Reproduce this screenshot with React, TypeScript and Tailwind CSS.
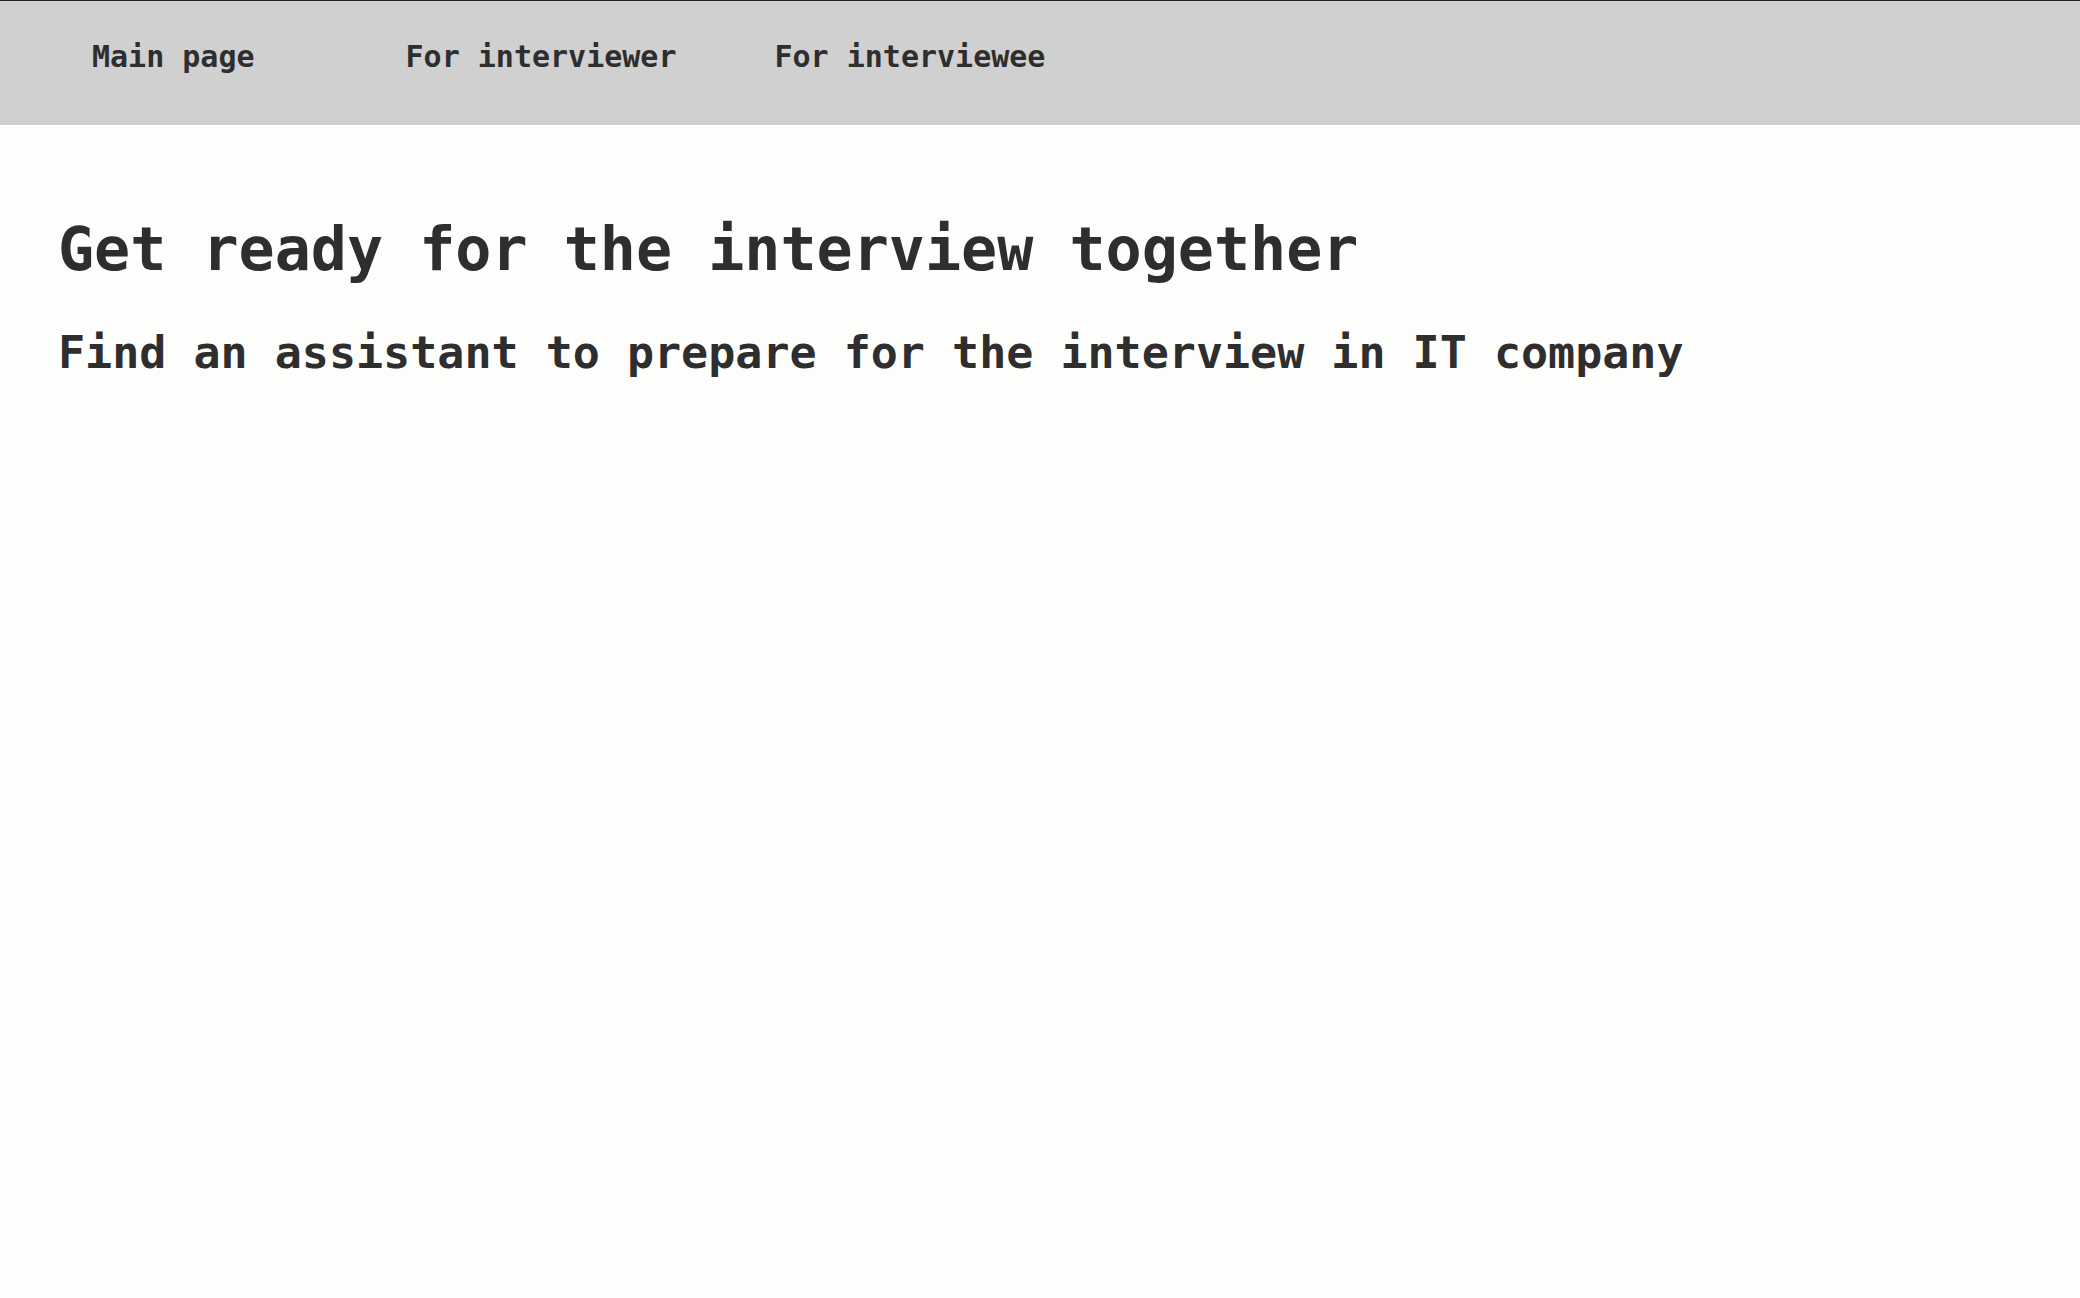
import React from 'react';

const links = [
  { title: 'Main page', className: 'ml-0' },
  { title: 'For interviewer', className: 'ml-[151px]' },
  { title: 'For interviewee', className: 'ml-[98px]' },
];

export default function App() {
  return (
    <div className="min-h-[1298px] bg-[#fdfdfc] text-[#2e2e2e] font-['DejaVu_Sans_Mono',monospace]">
      {/* Header */}
      <nav className="h-[125px] bg-[#d0d0d0] border-t border-[#222]">
        <ul className="flex pl-[92px] pt-[38px]">
          {links.map((link) => (
            <li key={link.title} className={link.className}>
              <a href="#" className="text-[30px] leading-[35px] font-bold text-[#2e2e2e]">
                {link.title}
              </a>
            </li>
          ))}
        </ul>
      </nav>

      {/* Hero */}
      <main className="pl-[58px] pt-[88px]">
        <h1 className="text-[60px] leading-[72px] font-bold">Get ready for the interview together</h1>
        <h2 className="mt-[41px] text-[45px] leading-[54px] font-bold">
          Find an assistant to prepare for the interview in IT company
        </h2>
      </main>
    </div>
  );
}
